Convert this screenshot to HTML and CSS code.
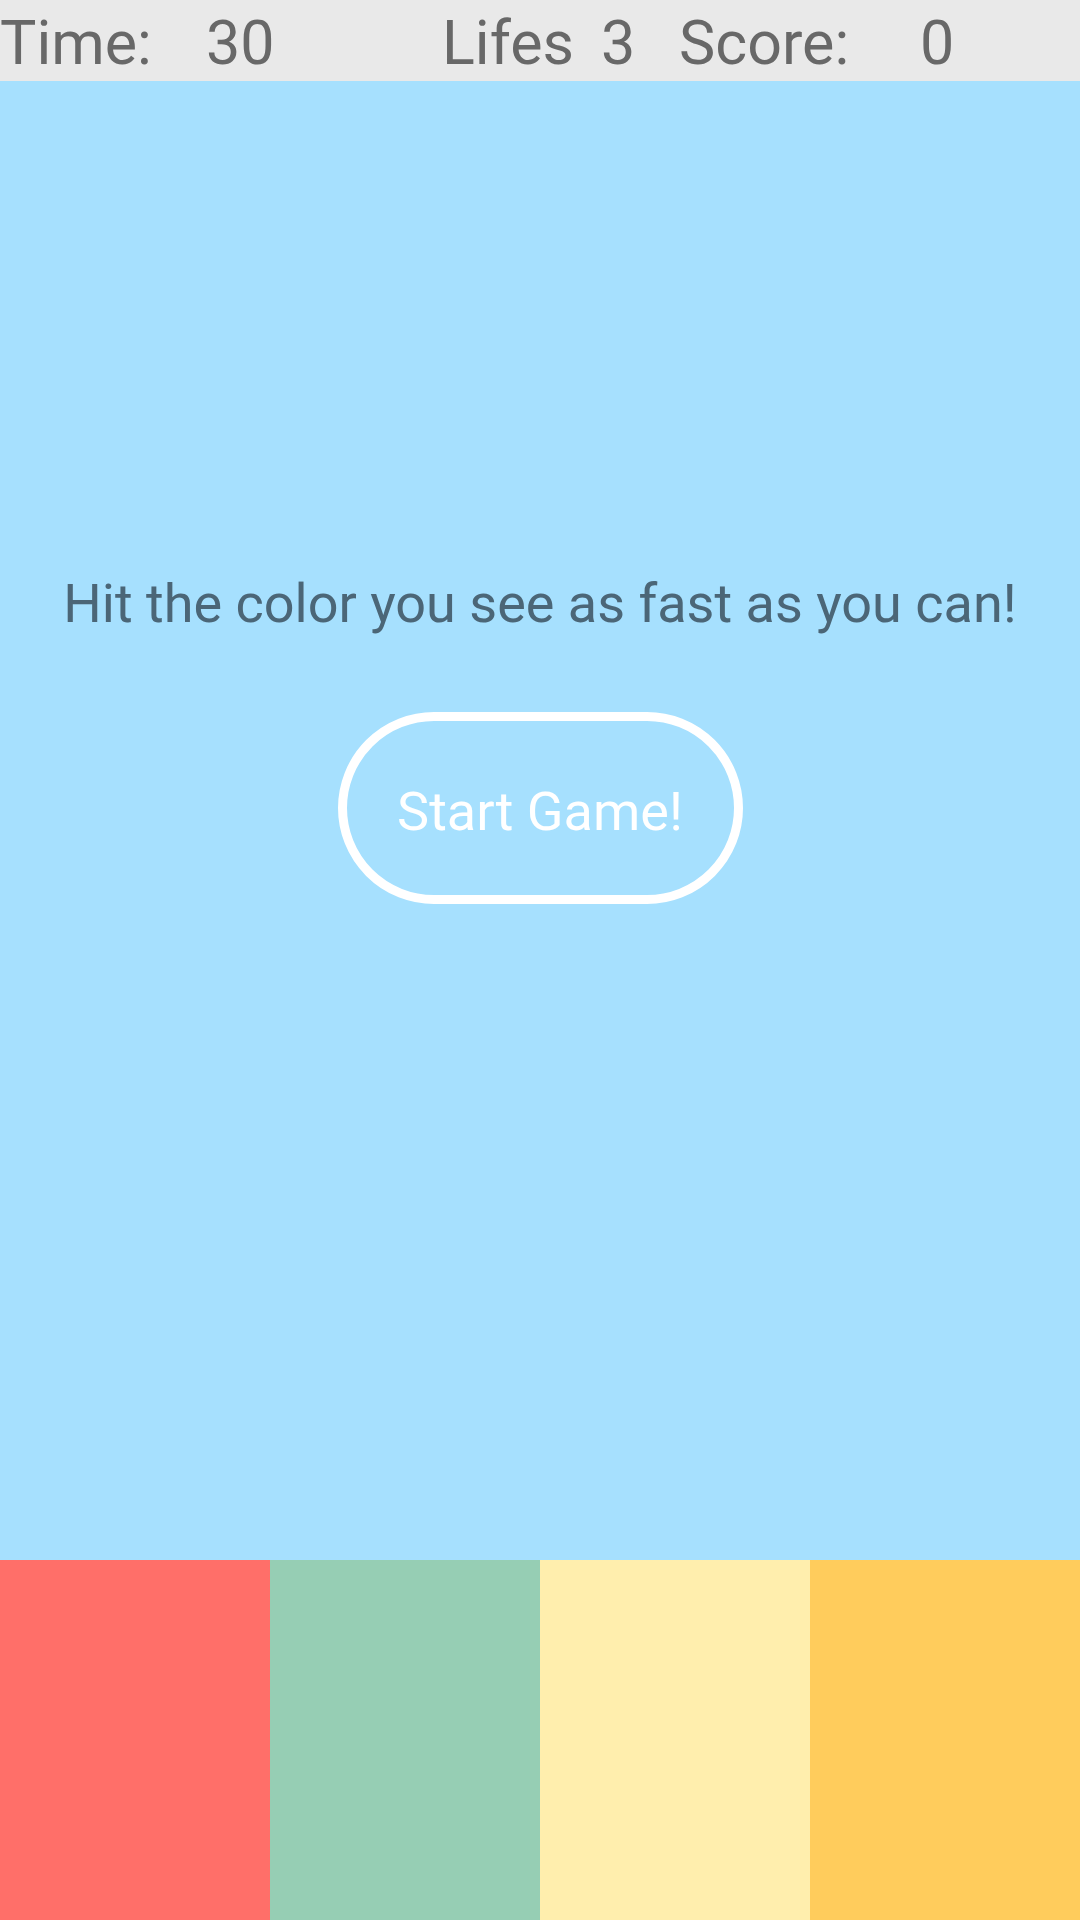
FILE: index.html
```html
<!DOCTYPE html>
<html>
<head>
<meta charset="utf-8">
<link rel="stylesheet" href="styles.css">
</head>
<body>
<div class="app">
  <header class="bar">
    <span class="cell c-time">Time:</span>
    <span class="cell c-timeval">30</span>
    <span class="cell c-lifes">Lifes</span>
    <span class="cell c-lifesval">3</span>
    <span class="cell c-score">Score:</span>
    <span class="cell c-scoreval">0</span>
  </header>
  <main class="stage">
    <p class="hint">Hit the color you see as fast as you can!</p>
    <button class="start">Start Game!</button>
  </main>
  <footer class="pads">
    <div class="pad pad-red"></div>
    <div class="pad pad-green"></div>
    <div class="pad pad-cream"></div>
    <div class="pad pad-orange"></div>
  </footer>
</div>
</body>
</html>
```
FILE: styles.css
```css
* { box-sizing: border-box; }
html, body { margin: 0; padding: 0; }
body {
  width: 1080px;
  height: 1920px;
  font-family: Roboto, "Liberation Sans", sans-serif;
  overflow: hidden;
}
.app {
  display: flex;
  flex-direction: column;
  height: 1920px;
}
.bar {
  height: 81px;
  flex: none;
  background: #e9e9e9;
  display: flex;
  align-items: flex-start;
  color: #686868;
  font-size: 61px;
  line-height: 1;
  padding-top: 13px;
}
.cell { display: block; white-space: nowrap; }
.c-time { width: 206px; }
.c-timeval { width: 236px; }
.c-lifes { width: 159px; }
.c-lifesval { width: 78px; }
.c-score { width: 241px; }
.c-scoreval { width: 100px; }
.stage {
  flex: 1;
  background: #a6e0fe;
  display: flex;
  flex-direction: column;
  align-items: center;
  padding-top: 492px;
}
.hint {
  margin: 0;
  font-size: 54px;
  line-height: 62px;
  color: #4b6677;
}
.start {
  margin-top: 77px;
  width: 405px;
  height: 192px;
  border: 9px solid #ffffff;
  border-radius: 96px;
  background: transparent;
  color: #ffffff;
  font-family: Roboto, "Liberation Sans", sans-serif;
  font-size: 54px;
  line-height: 62px;
  padding: 8px 0 0 0;
  display: flex;
  align-items: center;
  justify-content: center;
}
.pads {
  height: 360px;
  flex: none;
  display: grid;
  grid-template-columns: repeat(4, 1fr);
}
.pad-red { background: #ff6f69; }
.pad-green { background: #96ceb4; }
.pad-cream { background: #ffeead; }
.pad-orange { background: #ffcc5c; }
```
